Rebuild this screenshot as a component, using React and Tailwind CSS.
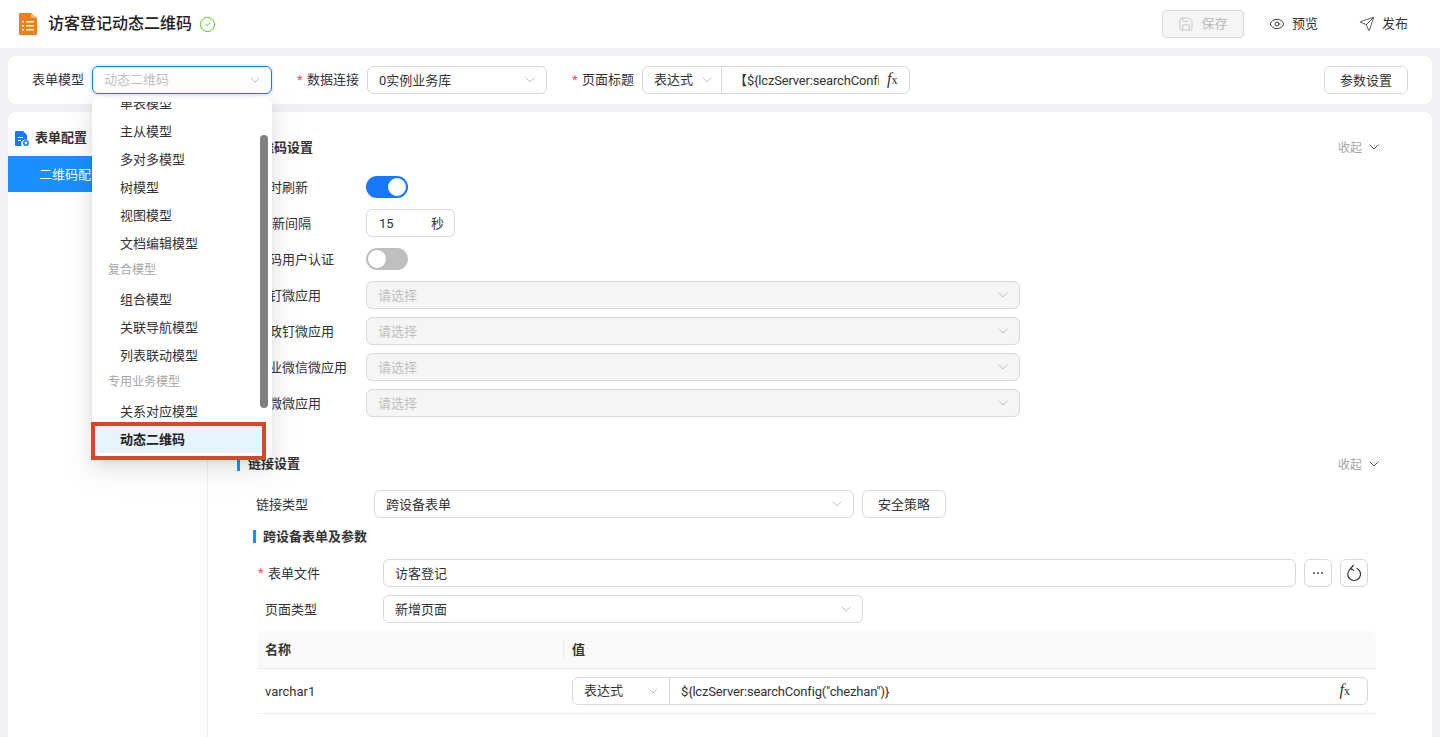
import React from "react";
import { ChevronDown, Eye, Save, Send, CircleCheck } from "lucide-react";

const Select = ({ value, placeholder, disabled, className = "" }) => (
  <div
    className={`flex items-center justify-between h-7 pl-[11px] pr-2 rounded-md border border-[#d9d9d9] ${
      disabled ? "bg-[#f5f5f5]" : "bg-white"
    } ${className}`}
  >
    <span className={`pt-[2px] ${placeholder ? "text-[#bfbfbf]" : "text-[#333]"}`}>{value || placeholder}</span>
    <ChevronDown size={16} strokeWidth={1} className="text-[#a0a0a0]" />
  </div>
);

const Fx = () => (
  <span className="font-['Liberation_Serif',serif] text-[#333] leading-none whitespace-nowrap">
    <span className="italic text-[16px]">f</span>
    <span className="text-[12px]">x</span>
  </span>
);

const Toggle = ({ on }) => (
  <div className={`w-[42px] h-[22px] rounded-full p-[2px] flex ${on ? "bg-[#1677ff] justify-end" : "bg-[#bfbfbf] justify-start"}`}>
    <div className="w-[18px] h-[18px] rounded-full bg-white" />
  </div>
);

const Collapse = () => (
  <div className="flex items-center gap-1 -mr-[2px] text-[#a6a6a6] text-[12px]">
    <span className="pt-[2px]">收起</span>
    <ChevronDown size={16} strokeWidth={1.3} className="text-[#333]" />
  </div>
);

const FormRow = ({ label, indent = "", children }) => (
  <div className="flex items-center h-9">
    <div className={`w-[110px] shrink-0 pt-[2px] ${indent}`}>{label}</div>
    {children}
  </div>
);

const menu = [
  { label: "单表模型" },
  { label: "主从模型" },
  { label: "多对多模型" },
  { label: "树模型" },
  { label: "视图模型" },
  { label: "文档编辑模型" },
  { label: "复合模型", group: true },
  { label: "组合模型" },
  { label: "关联导航模型" },
  { label: "列表联动模型" },
  { label: "专用业务模型", group: true },
  { label: "关系对应模型" },
  { label: "动态二维码", active: true },
];

const Dropdown = () => (
  <>
    <div className="absolute left-[92px] top-[98px] w-[180px] h-[362px] bg-white rounded-lg p-1 shadow-[0_6px_16px_rgba(0,0,0,0.08),0_3px_6px_-4px_rgba(0,0,0,0.12),0_9px_28px_8px_rgba(0,0,0,0.05)]">
      <div className="h-[354px] overflow-hidden">
        <div className="-mt-[13px]">
          {menu.map((m) =>
            m.group ? (
              <div key={m.label} className="h-7 pl-3 pb-[3px] flex items-center text-[12px] text-[#a6a6a6]">
                {m.label}
              </div>
            ) : (
              <div
                key={m.label}
                className={`h-7 pl-6 pt-[2px] flex items-center rounded ${
                  m.active ? "bg-[#e6f4ff] font-semibold text-[#222]" : "text-[#333]"
                }`}
              >
                {m.label}
              </div>
            )
          )}
        </div>
      </div>
      <div className="absolute left-[168px] top-[37px] w-2 h-[273px] rounded-full bg-[#808080]" />
    </div>
    {/* red annotation box */}
    <div className="absolute left-[91px] top-[422px] w-[175px] h-[38px] border-4 border-[#d9472b]" />
  </>
);

export default function App() {
  return (
    <div className="relative h-screen overflow-hidden flex flex-col bg-[#f0f1f5] text-[13px] leading-5 text-[#333] font-['Roboto','Noto_Sans_CJK_SC',sans-serif]">
      {/* header */}
      <div className="h-12 shrink-0 bg-white flex items-center pl-[19px] pr-8">
        <svg width="18" height="22" viewBox="0 0 18 22" className="shrink-0">
          <path d="M1 0h11l6 5v16a1 1 0 0 1-1 1H1a1 1 0 0 1-1-1V1a1 1 0 0 1 1-1z" fill="#f07f13" />
          <path d="M12 0l6 5h-5a1 1 0 0 1-1-1z" fill="#f9b36b" />
          <path d="M3 8h2v1.5H3zM7 8h8v1.5H7zM3 12h2v1.5H3zM7 12h8v1.5H7zM3 16h2v1.5H3zM7 16h8v1.5H7z" fill="#fff" />
        </svg>
        <div className="ml-[11px] text-[16px] font-medium text-[#222]">访客登记动态二维码</div>
        <CircleCheck size={17} strokeWidth={1.4} className="ml-[7px] text-[#52c41a]" />
        <div className="ml-auto flex items-center">
          <div className="w-[82px] h-7 flex items-center justify-center gap-[7px] rounded border border-[#d9d9d9] bg-[#f5f5f5] text-[#bbb]">
            <Save size={16} strokeWidth={1.2} />
            保存
          </div>
          <div className="ml-[25px] flex items-center gap-[7px]">
            <Eye size={16} strokeWidth={1.4} />
            预览
          </div>
          <div className="ml-[41px] flex items-center gap-[7px]">
            <Send size={16} strokeWidth={1.2} />
            发布
          </div>
        </div>
      </div>

      {/* toolbar */}
      <div className="mx-2 mt-2 h-12 shrink-0 bg-white rounded-lg flex items-center pl-6 pr-6">
        <span>表单模型</span>
        <div className="ml-2 w-[180px] h-7 flex items-center justify-between pl-[11px] pr-2 rounded-md border border-[#1677ff] ring-2 ring-[#e6f4ff] text-[#bfbfbf]">
          动态二维码
          <ChevronDown size={16} strokeWidth={1} className="text-[#a0a0a0]" />
        </div>
        <span className="ml-[25px] text-[#ff4d4f] w-[10px]">*</span>
        <span>数据连接</span>
        <Select value="0实例业务库" className="ml-2 w-[180px]" />
        <span className="ml-[25px] text-[#ff4d4f] w-[10px]">*</span>
        <span>页面标题</span>
        <div className="ml-2 w-[268px] h-7 flex items-center rounded-md border border-[#d9d9d9]">
          <div className="w-[79px] h-full flex items-center justify-between pl-[11px] pr-[6px] border-r border-[#d9d9d9]">
            表达式
            <ChevronDown size={16} strokeWidth={1} className="text-[#a0a0a0]" />
          </div>
          <div className="ml-3 w-[145px] pt-[2px] overflow-hidden whitespace-nowrap tracking-[-0.17px]">【${"{"}lczServer:searchConfig("chezhan")</div>
          <div className="ml-[8px]">
            <Fx />
          </div>
        </div>
        <div className="ml-auto w-[84px] h-7 pt-[2px] flex items-center justify-center rounded-md border border-[#d9d9d9]">参数设置</div>
      </div>

      {/* main */}
      <div className="mx-2 mt-2 flex-1 bg-white rounded-t-lg flex overflow-hidden">
        <div className="w-[200px] shrink-0 border-r border-[#eee]">
          <div className="h-11 flex items-center pl-[7px] gap-[6px] pt-[8px] font-semibold">
            <svg width="14" height="15" viewBox="0 0 14 15">
              <path d="M1 0h7l4 4v5a4 4 0 0 0-5 6H1a1 1 0 0 1-1-1V1a1 1 0 0 1 1-1z" fill="#1677ff" />
              <path d="M3 6h5v1H3zM3 9h3v1H3z" fill="#fff" />
              <circle cx="11" cy="12" r="2.2" fill="none" stroke="#1677ff" strokeWidth="1.5" />
            </svg>
            表单配置
          </div>
          <div className="h-9 flex items-center pl-[31px] pt-[2px] bg-[#1890ff] text-white">二维码配置</div>
        </div>

        <div className="flex-1 min-w-0 pl-[29px] pr-[52px]">
          {/* 二维码设置 */}
          <div className="h-[28px] mt-[21px] flex items-center justify-between">
            <div className="pl-[11px] pt-[2px] font-semibold">二维码设置</div>
            <Collapse />
          </div>
          <div className="mt-2 pl-[19px]">
            <FormRow label="定时刷新">
              <Toggle on />
            </FormRow>
            <FormRow label="刷新间隔" indent="pl-[3px]">
              <div className="w-[89px] h-7 pt-[2px] flex items-center justify-between pl-3 pr-[10px] rounded-md border border-[#d9d9d9]">
                <span>15</span>
                <span>秒</span>
              </div>
            </FormRow>
            <FormRow label="扫码用户认证">
              <Toggle />
            </FormRow>
            <FormRow label="钉钉微应用">
              <Select placeholder="请选择" disabled className="w-[654px]" />
            </FormRow>
            <FormRow label="浙政钉微应用">
              <Select placeholder="请选择" disabled className="w-[654px]" />
            </FormRow>
            <FormRow label="企业微信微应用">
              <Select placeholder="请选择" disabled className="w-[654px]" />
            </FormRow>
            <FormRow label="湘微微应用">
              <Select placeholder="请选择" disabled className="w-[654px]" />
            </FormRow>
          </div>

          {/* 链接设置 */}
          <div className="h-[28px] mt-[29px] flex items-center justify-between">
            <div className="border-l-[3px] border-[#1890ff] pl-2 leading-[14px] font-semibold">链接设置</div>
            <Collapse />
          </div>
          <div className="mt-3 pl-[19px] flex items-center">
            <span className="w-[118px] shrink-0 pt-[2px]">链接类型</span>
            <Select value="跨设备表单" className="w-[480px]" />
            <div className="ml-2 w-[84px] h-7 pt-[2px] flex items-center justify-center rounded-md border border-[#d9d9d9]">安全策略</div>
          </div>
          <div className="mt-3 ml-4 border-l-[3px] border-[#1890ff] pl-[7px] leading-[13px] font-semibold">跨设备表单及参数</div>
          <div className="mt-[16px] flex items-center">
            <span className="ml-[21px] w-[10px] text-[#ff4d4f]">*</span>
            <span className="w-[115px] shrink-0 pt-[2px]">表单文件</span>
            <div className="w-[913px] h-7 pt-[2px] flex items-center pl-[11px] rounded-md border border-[#d9d9d9]">访客登记</div>
            <div className="ml-2 w-7 h-7 flex items-center justify-center gap-[2px] rounded-md border border-[#d9d9d9] shadow-[0_2px_0_rgba(0,0,0,0.02)]">
              <i className="w-[2px] h-[2px] rounded-full bg-[#444]" />
              <i className="w-[2px] h-[2px] rounded-full bg-[#444]" />
              <i className="w-[2px] h-[2px] rounded-full bg-[#444]" />
            </div>
            <div className="ml-2 w-7 h-7 flex items-center justify-center rounded-md border border-[#d9d9d9] shadow-[0_2px_0_rgba(0,0,0,0.02)]">
              <svg width="16" height="18" viewBox="0 0 16 18" fill="none" stroke="#333" strokeWidth="1.2">
                <path d="M4.6 4.8a6.4 6.4 0 1 0 6-.6" />
                <path d="M7.6 1L4.6 4.6l3.4 2" />
              </svg>
            </div>
          </div>
          <div className="mt-2 flex items-center">
            <span className="ml-[28px] w-[118px] shrink-0 pt-[2px]">页面类型</span>
            <Select value="新增页面" className="w-[480px]" />
          </div>

          {/* parameter table */}
          <div className="mt-2 ml-5 w-[1119px]">
            <div className="h-[38px] flex items-center bg-[#fafafa] rounded-t-lg border-b border-[#eee] font-semibold">
              <div className="w-[307px] pl-2 h-5 flex items-center border-r border-[#eee]">名称</div>
              <div className="pl-2">值</div>
            </div>
            <div className="h-[45px] flex items-center border-b border-[#eee]">
              <div className="w-[315px] pl-2 pt-[2px]">varchar1</div>
              <div className="w-[796px] h-7 flex items-center rounded-md border border-[#d9d9d9]">
                <div className="w-[97px] h-full flex items-center justify-between pl-[11px] pr-2 border-r border-[#d9d9d9]">
                  表达式
                  <ChevronDown size={16} strokeWidth={1} className="text-[#a0a0a0]" />
                </div>
                <div className="pl-[11px] pt-[2px] tracking-[-0.17px]">${"{"}lczServer:searchConfig("chezhan")}</div>
                <div className="ml-auto pr-[17px]">
                  <Fx />
                </div>
              </div>
            </div>
          </div>
        </div>
      </div>

      <Dropdown />
    </div>
  );
}
